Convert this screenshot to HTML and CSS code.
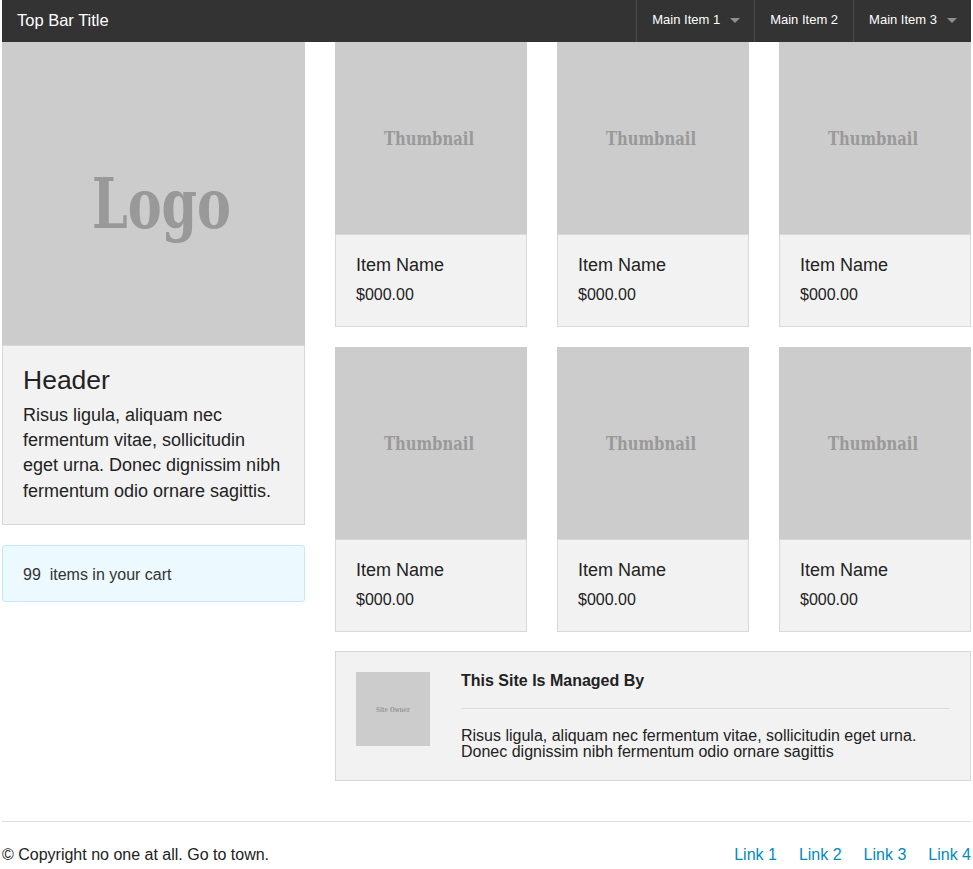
FILE: index.html
```html
<!DOCTYPE html>
<html lang="en">
<head>
<meta charset="utf-8">
<title>Shop</title>
<link rel="stylesheet" href="styles.css">
</head>
<body>
<div class="page">
  <nav class="topbar">
    <h1 class="topbar-title">Top Bar Title</h1>
    <ul class="topbar-menu">
      <li class="menu-item has-dropdown"><a href="#">Main Item 1</a><span class="caret"></span></li>
      <li class="menu-item"><a href="#">Main Item 2</a></li>
      <li class="menu-item has-dropdown"><a href="#">Main Item 3</a><span class="caret"></span></li>
    </ul>
  </nav>

  <main class="main">
    <aside class="sidebar">
      <div class="logo-box">
        <svg class="ph-svg" viewBox="0 0 303 303" width="303" height="303">
          <text class="ph-text" x="90" y="186" textLength="139" lengthAdjust="spacingAndGlyphs" font-size="70">Logo</text>
        </svg>
      </div>
      <div class="panel intro">
        <h2 class="intro-title">Header</h2>
        <p class="intro-text">Risus ligula, aliquam nec fermentum vitae, sollicitudin eget urna. Donec dignissim nibh fermentum odio ornare sagittis.</p>
      </div>
      <div class="cart">99&nbsp; items in your cart</div>
    </aside>

    <section class="content">
      <div class="products">
        <div class="card">
          <div class="thumb"><svg class="ph-svg" viewBox="0 0 192 192" width="192" height="192"><text class="ph-text" x="49" y="103" textLength="90" lengthAdjust="spacingAndGlyphs" font-size="19">Thumbnail</text></svg></div>
          <div class="card-body"><h3 class="item-name">Item Name</h3><p class="item-price">$000.00</p></div>
        </div>
        <div class="card">
          <div class="thumb"><svg class="ph-svg" viewBox="0 0 192 192" width="192" height="192"><text class="ph-text" x="49" y="103" textLength="90" lengthAdjust="spacingAndGlyphs" font-size="19">Thumbnail</text></svg></div>
          <div class="card-body"><h3 class="item-name">Item Name</h3><p class="item-price">$000.00</p></div>
        </div>
        <div class="card">
          <div class="thumb"><svg class="ph-svg" viewBox="0 0 192 192" width="192" height="192"><text class="ph-text" x="49" y="103" textLength="90" lengthAdjust="spacingAndGlyphs" font-size="19">Thumbnail</text></svg></div>
          <div class="card-body"><h3 class="item-name">Item Name</h3><p class="item-price">$000.00</p></div>
        </div>
        <div class="card">
          <div class="thumb"><svg class="ph-svg" viewBox="0 0 192 192" width="192" height="192"><text class="ph-text" x="49" y="103" textLength="90" lengthAdjust="spacingAndGlyphs" font-size="19">Thumbnail</text></svg></div>
          <div class="card-body"><h3 class="item-name">Item Name</h3><p class="item-price">$000.00</p></div>
        </div>
        <div class="card">
          <div class="thumb"><svg class="ph-svg" viewBox="0 0 192 192" width="192" height="192"><text class="ph-text" x="49" y="103" textLength="90" lengthAdjust="spacingAndGlyphs" font-size="19">Thumbnail</text></svg></div>
          <div class="card-body"><h3 class="item-name">Item Name</h3><p class="item-price">$000.00</p></div>
        </div>
        <div class="card">
          <div class="thumb"><svg class="ph-svg" viewBox="0 0 192 192" width="192" height="192"><text class="ph-text" x="49" y="103" textLength="90" lengthAdjust="spacingAndGlyphs" font-size="19">Thumbnail</text></svg></div>
          <div class="card-body"><h3 class="item-name">Item Name</h3><p class="item-price">$000.00</p></div>
        </div>
      </div>

      <div class="panel owner">
        <div class="owner-img"><svg class="ph-svg" viewBox="0 0 74 74" width="74" height="74"><text class="ph-text" x="20" y="40" textLength="34" lengthAdjust="spacingAndGlyphs" font-size="7">Site Owner</text></svg></div>
        <div class="owner-body">
          <h4 class="owner-title">This Site Is Managed By</h4>
          <hr class="owner-rule">
          <p class="owner-text">Risus ligula, aliquam nec fermentum vitae, sollicitudin eget urna. Donec dignissim nibh fermentum odio ornare sagittis</p>
        </div>
      </div>
    </section>
  </main>

  <footer class="footer">
    <p class="copyright">© Copyright no one at all. Go to town.</p>
    <ul class="footer-links">
      <li><a href="#">Link 1</a></li>
      <li><a href="#">Link 2</a></li>
      <li><a href="#">Link 3</a></li>
      <li><a href="#">Link 4</a></li>
    </ul>
  </footer>
</div>
</body>
</html>
```

FILE: styles.css
```css
* { box-sizing: border-box; }

html, body {
  margin: 0;
  padding: 0;
  background: #fff;
}

body {
  font-family: "Liberation Sans", Arial, sans-serif;
  color: #222;
}

.page {
  margin: 0 2px;
}

/* Top bar */
.topbar {
  display: flex;
  justify-content: space-between;
  align-items: stretch;
  height: 42px;
  background: #333;
}

.topbar-title {
  margin: 0;
  padding-left: 15px;
  font-size: 16.5px;
  font-weight: normal;
  line-height: 40px;
  color: #fff;
}

.topbar-menu {
  display: flex;
  margin: 0;
  padding: 0;
  list-style: none;
}

.menu-item {
  display: flex;
  align-items: center;
  border-left: 1px solid #4a4a4a;
  padding: 0 15px 2px;
}

.menu-item.has-dropdown {
  padding-right: 14px;
}

.menu-item a {
  color: #fff;
  text-decoration: none;
  font-size: 13px;
  line-height: 38px;
}

.caret {
  display: inline-block;
  width: 0;
  height: 0;
  margin-left: 10px;
  margin-top: 1px;
  border-left: 5px solid transparent;
  border-right: 5px solid transparent;
  border-top: 5px solid rgba(255, 255, 255, 0.45);
}

/* Main layout */
.main {
  display: grid;
  grid-template-columns: 303px 636px;
  column-gap: 30px;
}

.ph-svg {
  display: block;
}

.ph-text {
  font-family: "DejaVu Serif Condensed", "DejaVu Serif", "Noto Serif", serif;
  font-stretch: condensed;
  font-weight: bold;
  fill: #999;
}

.logo-box {
  width: 303px;
  height: 303px;
  background: #ccc;
}

.panel {
  background: #f2f2f2;
  border: 1px solid #d8d8d8;
  padding: 20px;
}

.intro {
  margin-bottom: 20px;
  padding-top: 21px;
}

.intro-title {
  margin: 0 0 9px;
  font-size: 26.5px;
  font-weight: normal;
  line-height: 27px;
  color: #222;
}

.intro-text {
  margin: 0;
  font-size: 18px;
  line-height: 25.2px;
}

.cart {
  background: #ecf9fe;
  border: 1px solid #c6e8f4;
  border-radius: 3px;
  padding: 20px 20px 18px;
  font-size: 16px;
  line-height: 17px;
  color: #333;
}

/* Products */
.products {
  display: grid;
  grid-template-columns: repeat(3, 192px);
  column-gap: 30px;
  row-gap: 20px;
  margin-bottom: 19px;
}

.thumb {
  width: 192px;
  height: 192px;
  background: #ccc;
}

.card-body {
  background: #f2f2f2;
  border: 1px solid #d8d8d8;
  padding: 21px 20px 19px;
}

.item-name {
  margin: 0 0 8px;
  font-size: 18px;
  font-weight: normal;
  line-height: 18px;
  color: #222;
}

.item-price {
  margin: 0;
  font-size: 16px;
  line-height: 25px;
}

/* Owner panel */
.owner {
  display: flex;
  gap: 31px;
}

.owner-img {
  flex: 0 0 74px;
  height: 74px;
  background: #ccc;
}

.owner-body {
  flex: 1 1 auto;
}

.owner-title {
  margin: 1px 0 0;
  font-size: 16px;
  font-weight: bold;
  line-height: 16px;
  color: #222;
}

.owner-rule {
  margin: 19px 0 19px;
  border: 0;
  border-top: 1px solid #ddd;
  height: 0;
}

.owner-text {
  margin: 0;
  font-size: 16px;
  line-height: 16px;
}

/* Footer */
.footer {
  margin-top: 40px;
  border-top: 1px solid #ddd;
  padding-top: 20px;
  display: flex;
  justify-content: space-between;
  align-items: center;
}

.copyright {
  margin: 0;
  font-size: 16px;
  line-height: 25.6px;
}

.footer-links {
  display: flex;
  gap: 22px;
  margin: 0;
  padding: 0;
  list-style: none;
}

.footer-links a {
  color: #008cba;
  text-decoration: none;
  font-size: 16px;
  line-height: 25.6px;
}
```
